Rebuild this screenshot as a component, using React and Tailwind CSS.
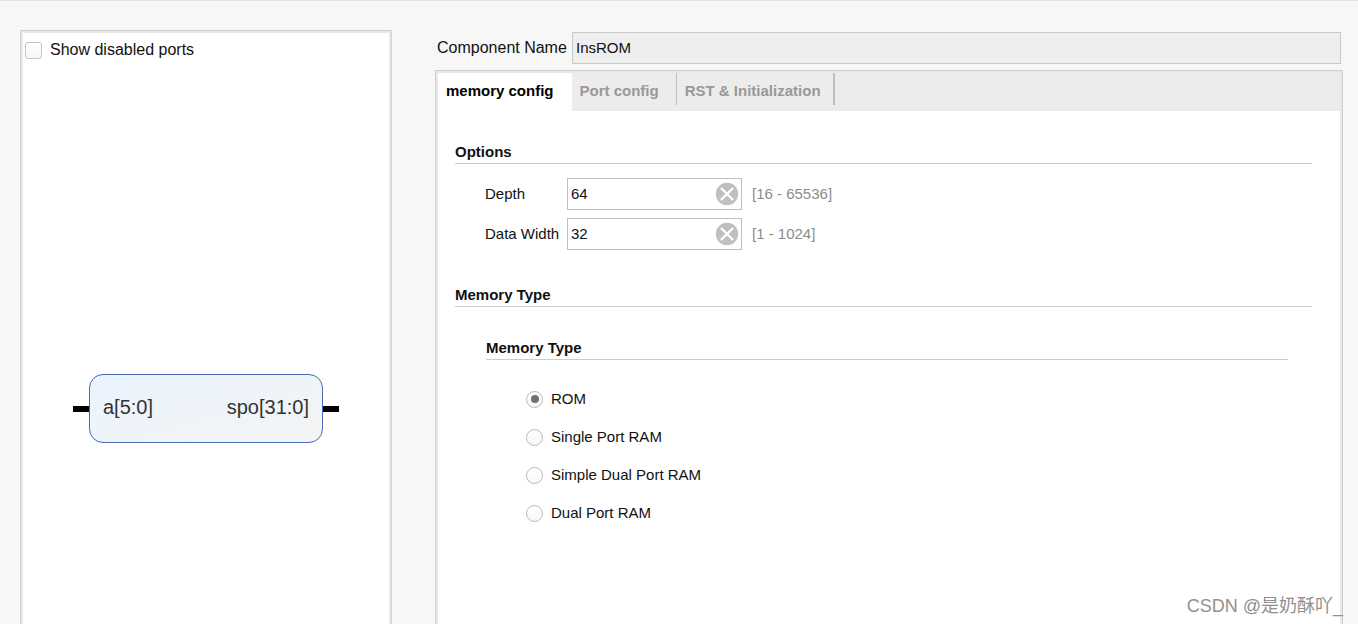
import { useState } from 'react';

const tabs = [
  { name: 'memory config', className: 'pl-2 pr-[18px] bg-white text-black' },
  { name: 'Port config', className: 'px-2 text-[#999999]' },
  { name: 'RST & Initialization', className: 'px-2 text-[#999999]' },
];

const memoryTypes = ['ROM', 'Single Port RAM', 'Simple Dual Port RAM', 'Dual Port RAM'];

function SectionTitle({ children }) {
  return <h2 className="border-b border-[#cccccc] pb-px text-[15px] leading-5 font-bold">{children}</h2>;
}

function NumberField({ id, label, value, range, onChange }) {
  return (
    <div className="flex items-center">
      <label htmlFor={id} className="w-[82px] shrink-0">{label}</label>
      <div className="relative w-[175px] shrink-0">
        <input
          id={id}
          type="text"
          value={value}
          onChange={(e) => onChange(e.target.value)}
          className="block h-8 w-full border border-[#bfbfbf] bg-white pr-8 pb-0.5 pl-[3px] outline-none"
        />
        <button
          type="button"
          aria-label={`Clear ${label}`}
          onClick={() => onChange('')}
          className="absolute top-1 right-[3px] size-6"
        >
          <svg viewBox="0 0 24 24" className="size-6">
            <circle cx="12" cy="12" r="11.2" fill="#bfbfbf" />
            <path d="M6 6 18 18M18 6 6 18" stroke="#fff" strokeWidth="2.4" />
          </svg>
        </button>
      </div>
      <span className="ml-2.5 text-[#8c8c8c]">{range}</span>
    </div>
  );
}

function PortDiagram() {
  return (
    <div className="flex items-center">
      <span className="h-1.5 w-4 bg-black" />
      <div className="flex h-[69px] w-[234px] items-center justify-between rounded-[14px] border border-[#4868b0] bg-linear-to-br from-[#eaf4ff] via-[#eff4f9] to-[#f4f4f4] px-[13px] pb-1 text-xl text-[#333333]">
        <span>a[5:0]</span>
        <span>spo[31:0]</span>
      </div>
      <span className="h-1.5 w-4 bg-black" />
    </div>
  );
}

export default function App() {
  const [depth, setDepth] = useState('64');
  const [width, setWidth] = useState('32');
  const [type, setType] = useState('ROM');

  return (
    <div className="relative flex min-h-screen border-t border-[#e2e2e2] bg-[#f7f7f7] pr-[15px] pl-5 font-['Liberation_Sans','Noto_Sans_CJK_SC',sans-serif] text-[15px] leading-5 text-[#111111]">
      <aside className="mt-[29px] w-[372px] shrink-0 border-x border-t border-[#d0d0d0] bg-white">
        <div className="flex h-full flex-col border-x-2 border-t-2 border-[#e8e8e8]">
          <label className="flex items-center gap-2 pt-[7px] pl-0.5 text-base leading-5">
            <input
              type="checkbox"
              className="size-[17px] appearance-none rounded-[3px] border border-[#c4c4c4] bg-linear-to-b from-white to-[#f8f8f8] checked:bg-[#777777]"
            />
            Show disabled ports
          </label>
          <div className="mt-[314px] ml-[50px]">
            <PortDiagram />
          </div>
        </div>
      </aside>

      <main className="ml-[43px] flex min-w-0 flex-1 flex-col pt-[31px]">
        <div className="flex items-center pr-0.5 pl-0.5">
          <label htmlFor="component-name" className="w-[135px] shrink-0 text-base leading-5">Component Name</label>
          <input
            id="component-name"
            type="text"
            readOnly
            value="InsROM"
            className="h-8 min-w-0 flex-1 border border-[#c8c8c8] bg-[#eeeeee] px-[3px] pb-0.5 outline-none"
          />
        </div>

        <div className="mt-1.5 flex-1 border-x border-t border-[#d0d0d0] bg-white">
          <div className="h-full border-x-2 border-t-2 border-[#e8e8e8]">
            <div role="tablist" className="flex h-[38px] bg-[#ececec]">
              {tabs.map((tab, i) => (
                <div key={tab.name} className="flex">
                  <button
                    type="button"
                    role="tab"
                    aria-selected={i === 0}
                    className={`pb-0.5 font-bold ${tab.className}`}
                  >
                    {tab.name}
                  </button>
                  {i === 1 && <span className="ml-[9px] h-8 w-px bg-[#bfbfbf]" />}
                  {i === 2 && <span className="ml-1 h-8 w-0.5 bg-[#bfbfbf]" />}
                </div>
              ))}
            </div>

            <div className="pt-[31px] pr-7 pl-[17px]">
              <SectionTitle>Options</SectionTitle>
              <div className="mt-3.5 ml-[30px] flex flex-col gap-2">
                <NumberField id="depth" label="Depth" value={depth} range="[16 - 65536]" onChange={setDepth} />
                <NumberField id="data-width" label="Data Width" value={width} range="[1 - 1024]" onChange={setWidth} />
              </div>

              <div className="mt-[35px]">
                <SectionTitle>Memory Type</SectionTitle>
              </div>
              <fieldset className="mt-[31px] mr-6 ml-[31px]">
                <SectionTitle>Memory Type</SectionTitle>
                <div className="mt-[29px] ml-10 flex flex-col items-start gap-[18px]">
                  {memoryTypes.map((name) => (
                    <label key={name} className="flex items-center gap-2">
                      <input
                        type="radio"
                        name="memory-type"
                        checked={type === name}
                        onChange={() => setType(name)}
                        className="grid size-[17px] appearance-none place-items-center rounded-full border border-[#b8b8b8] bg-linear-to-b from-white to-[#f8f8f8] before:size-2 before:rounded-full checked:before:bg-[#707070]"
                      />
                      {name}
                    </label>
                  ))}
                </div>
              </fieldset>
            </div>
          </div>
        </div>
      </main>

      <span className="absolute right-[15px] bottom-1.5 text-lg leading-6 text-[#909090]">CSDN @是奶酥吖_</span>
    </div>
  );
}
